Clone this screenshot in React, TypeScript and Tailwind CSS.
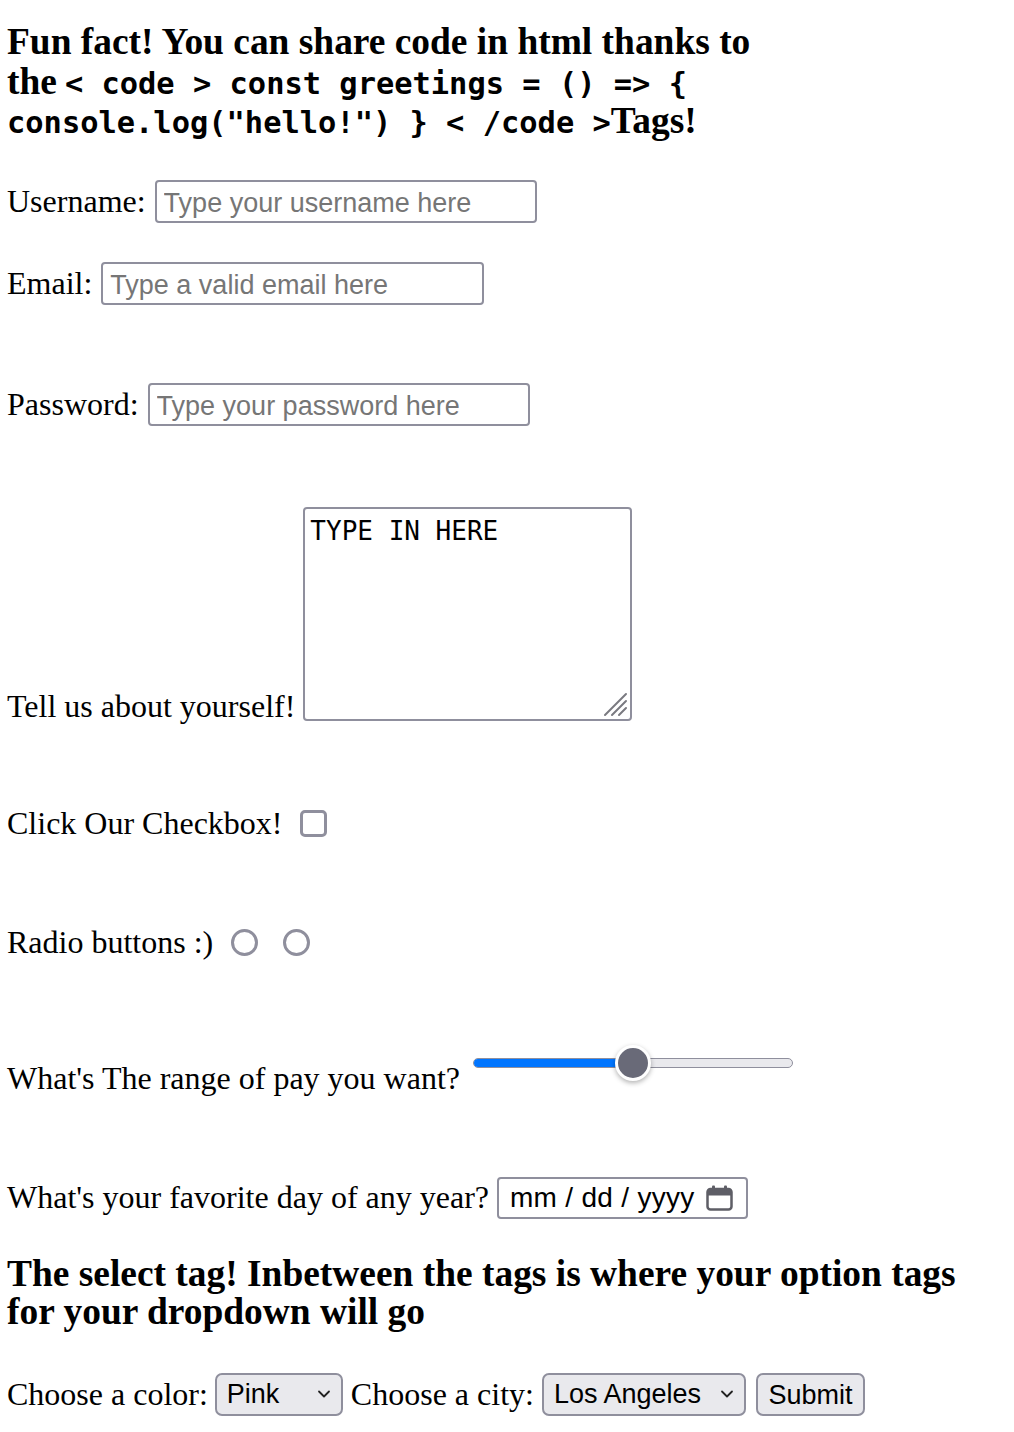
import React from 'react';

const serif = "font-['Liberation_Serif',serif]";
const sans = "font-['Liberation_Sans',Arial,sans-serif]";

function TextField({ placeholder, type = 'text', width }: { placeholder: string; type?: string; width: string }) {
    return (
        <input
            type={type}
            placeholder={placeholder}
            className={`${width} h-[43px] border-2 border-[#8f8f9d] rounded-[4px] pl-[7px] pt-[3px] text-[27px] ${sans} text-black placeholder:text-[#767676] outline-none`}
        />
    );
}

function Chevron() {
    return (
        <svg width="14" height="10" viewBox="0 0 14 10" className="shrink-0">
            <path d="M2 2.5 L7 7.5 L12 2.5" fill="none" stroke="#222" strokeWidth="1.8" strokeLinecap="round" strokeLinejoin="round" />
        </svg>
    );
}

function SelectBox({ value, width, textWidth }: { value: string; width: string; textWidth: string }) {
    return (
        <div className={`${width} h-[43px] flex items-center pl-[10px] pr-[10px] bg-[#e9e9ed] border-2 border-[#8f8f9d] rounded-[7px] text-[27px] ${sans} text-black`}>
            <span className={textWidth}>{value}</span>
            <Chevron />
        </div>
    );
}

function CalendarIcon() {
    return (
        <svg width="27" height="26" viewBox="0 0 27 26">
            <rect x="1.5" y="4" width="24" height="20.5" rx="3" fill="none" stroke="#5e5e66" strokeWidth="2.5" />
            <path d="M1.5 7 a3 3 0 0 1 3 -3 h18 a3 3 0 0 1 3 3 v3.5 h-24 z" fill="#5e5e66" />
            <rect x="6" y="0.5" width="3" height="5" rx="1" fill="#5e5e66" />
            <rect x="18" y="0.5" width="3" height="5" rx="1" fill="#5e5e66" />
        </svg>
    );
}

export default function App() {
    return (
        <div className={`min-h-[1432px] bg-white pl-[7px] pr-[8px] text-black ${serif} text-[32px]`}>
            {/* Heading with inline code */}
            <h3 className="pt-[22px] h-[141px] text-[37.44px] font-bold leading-[39.5px]">
                Fun fact! You can share code in html thanks to
                <br />
                the
                <code className="ml-[8px] font-['DejaVu_Sans_Mono',monospace] text-[30.4px] font-bold leading-none">
                    {'< code > const greetings = () => { console.log("hello!") } < /code >'}
                </code>
                Tags!
            </h3>

            {/* Username */}
            <div className="mt-[39px] h-[43px] flex items-center gap-[9px]">
                <label className="leading-[37px]">Username:</label>
                <TextField placeholder="Type your username here" width="w-[382px]" />
            </div>

            {/* Email */}
            <div className="mt-[39px] h-[43px] flex items-center gap-[9px]">
                <label className="leading-[37px]">Email:</label>
                <TextField type="email" placeholder="Type a valid email here" width="w-[383px]" />
            </div>

            {/* Password */}
            <div className="mt-[78px] h-[43px] flex items-center gap-[9px]">
                <label className="leading-[37px]">Password:</label>
                <TextField type="password" placeholder="Type your password here" width="w-[382px]" />
            </div>

            {/* Textarea */}
            <div className="mt-[81px] flex items-end gap-[8px]">
                <label className="leading-[37px] mb-[-4px]">Tell us about yourself!</label>
                <div className="relative">
                    <textarea
                        defaultValue="TYPE IN HERE"
                        className="block w-[329px] h-[214px] border-2 border-[#8f8f9d] rounded-[4px] pl-[5px] pt-[4px] font-['DejaVu_Sans_Mono',monospace] text-[26px] leading-[36px] text-black resize-none outline-none"
                    />
                    <svg width="26" height="26" viewBox="0 0 26 26" className="absolute right-[4px] bottom-[4px]">
                        <path d="M3 24 L24 3 M10 24 L24 10 M17 24 L24 17" stroke="#7a7a80" strokeWidth="2" strokeLinecap="round" />
                    </svg>
                </div>
            </div>

            {/* Checkbox */}
            <div className="mt-[89px] h-[27px] flex items-center">
                <label className="leading-[37px]">Click Our Checkbox!</label>
                <span className="ml-[17px] w-[27px] h-[27px] border-[3px] border-[#8f8f9d] rounded-[5px]" />
            </div>

            {/* Radios */}
            <div className="mt-[92px] h-[26px] flex items-center">
                <label className="leading-[37px]">Radio buttons :)</label>
                <span className="ml-[18px] w-[27px] h-[27px] border-[3px] border-[#8f8f9d] rounded-full" />
                <span className="ml-[25px] w-[27px] h-[27px] border-[3px] border-[#8f8f9d] rounded-full" />
            </div>

            {/* Range */}
            <div className="mt-[90px] flex items-start">
                <label className="mt-[14.5px] leading-[37px]">What's The range of pay you want?</label>
                <div className="relative ml-[13px] w-[320px] h-[36px] flex items-center">
                    <div className="w-full h-[10px] rounded-full bg-[#e9e9ed] border border-[#8f8f9d] overflow-hidden">
                        <div className="w-[160px] h-full bg-[#0075ff]" />
                    </div>
                    <span className="absolute left-[142px] top-0 w-[36px] h-[36px] rounded-full bg-[#696a78] border-[3px] border-white shadow-[0_2px_5px_rgba(0,0,0,0.3)]" />
                </div>
            </div>

            {/* Date */}
            <div className="mt-[80px] h-[42px] flex items-center gap-[8px]">
                <label className="leading-[37px]">What's your favorite day of any year?</label>
                <div className={`w-[251px] h-[42px] flex items-center justify-between pl-[11px] pr-[13px] border-2 border-[#8f8f9d] rounded-[4px] text-[28px] tracking-[0.3px] ${sans}`}>
                    <span>mm / dd / yyyy</span>
                    <CalendarIcon />
                </div>
            </div>

            {/* Second heading */}
            <h3 className="mt-[36px] h-[79px] text-[37.44px] font-bold leading-[38.5px]">
                The select tag! Inbetween the tags is where your option tags for your dropdown will go
            </h3>

            {/* Selects */}
            <div className="mt-[39px] h-[43px] flex items-center">
                <label className="leading-[37px]">Choose a color:</label>
                <div className="ml-[7px]">
                    <SelectBox value="Pink" width="w-[128px]" textWidth="w-[90px]" />
                </div>
                <label className="ml-[8px] leading-[37px]">Choose a city:</label>
                <div className="ml-[8px]">
                    <SelectBox value="Los Angeles" width="w-[204px]" textWidth="w-[166px]" />
                </div>
                <button className={`ml-[10px] w-[109px] h-[43px] bg-[#e9e9ed] border-2 border-[#8f8f9d] rounded-[7px] text-[27px] ${sans} text-black`}>
                    Submit
                </button>
            </div>
        </div>
    );
}
